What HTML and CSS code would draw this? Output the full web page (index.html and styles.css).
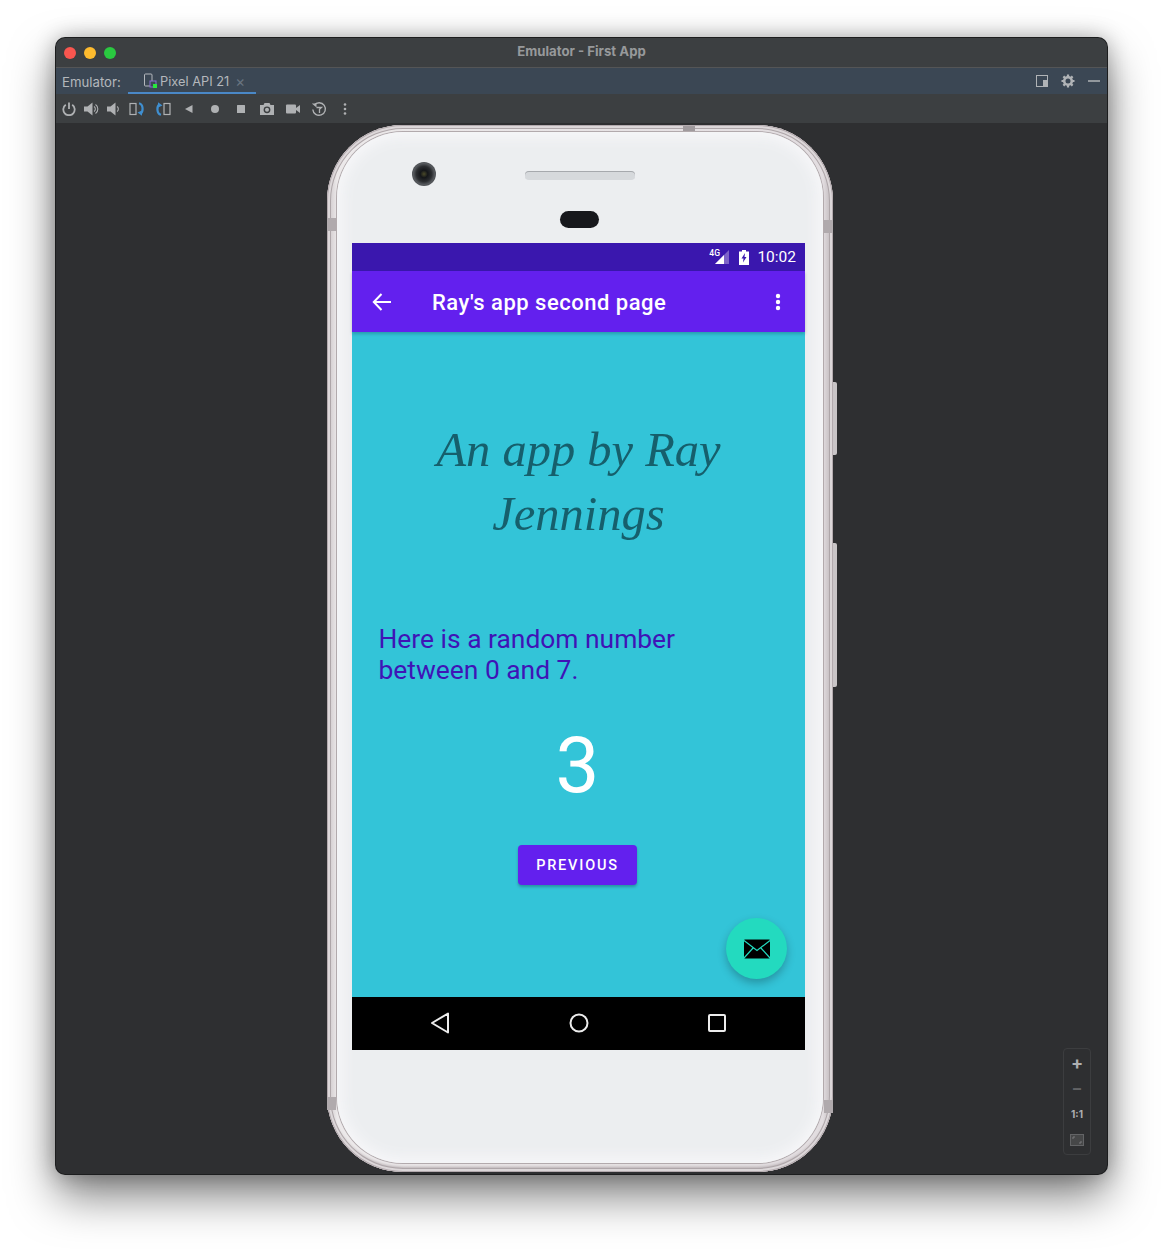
FILE: index.html
```html
<!DOCTYPE html>
<html lang="en">
<head>
    <meta charset="UTF-8">
    <title>Emulator - First App</title>
    <link rel="stylesheet" href="styles.css">
</head>
<body>
    <div class="window">
        <div class="titlebar">
            <div class="lights">
                <span class="light red"></span>
                <span class="light yellow"></span>
                <span class="light green"></span>
            </div>
            <div class="window-title">Emulator - First App</div>
        </div>

        <div class="tabbar">
            <span class="tab-label">Emulator:</span>
            <div class="tab">
                <svg width="16" height="16" viewBox="0 0 16 16">
                    <rect x="1.5" y="1" width="7.5" height="12" rx="1" fill="none" stroke="#b4b8bc" stroke-width="1"/>
                    <rect x="7" y="8" width="6" height="6" fill="#3b4754" stroke="#8a6fd0" stroke-width="1"/>
                    <rect x="10" y="11" width="4" height="4" fill="#27e83c"/>
                </svg>
                <span class="tab-name">Pixel API 21</span>
                <span class="tab-close">&#215;</span>
            </div>
            <div class="tab-actions">
                <svg width="14" height="14" viewBox="0 0 14 14">
                    <rect x="1.5" y="1.5" width="11" height="11" fill="none" stroke="#b0b3b6" stroke-width="1"/>
                    <rect x="8" y="6" width="4.5" height="6.5" fill="#b0b3b6"/>
                </svg>
                <svg width="14" height="14" viewBox="0 0 14 14">
                    <circle cx="7" cy="7" r="3.8" fill="none" stroke="#b0b3b6" stroke-width="2.6"/>
                    <path d="M7 .5v3M7 10.500v3M.5 7h3M10.500 7h3M2.400 2.400l2 2M9.600 9.600l2 2M11.600 2.400l-2 2M4.400 9.600l-2 2" stroke="#b0b3b6" stroke-width="2.200"/>
                </svg>
                <svg width="14" height="14" viewBox="0 0 14 14"><path d="M1 7h12" stroke="#b0b3b6" stroke-width="1.400"/></svg>
            </div>
        </div>

        <div class="toolbar">
            <span class="tool narrow"><svg width="14" height="14" viewBox="0 0 14 14"><path d="M3.800 2.800a5.700 5.700 0 1 0 6.400 0M7 .5V7" fill="none" stroke="#afb1b3" stroke-width="1.800"/></svg></span>
            <span class="tool narrow"><svg width="15" height="14" viewBox="0 0 15 14"><path d="M0 4.500h3.500L8.500 .5v13l-5-4H0z" fill="#afb1b3"/><path d="M10 4.500a3 3 0 0 1 0 5M11.500 2.500a5.500 5.500 0 0 1 0 9" fill="none" stroke="#afb1b3" stroke-width="1.100"/></svg></span>
            <span class="tool narrow"><svg width="14" height="14" viewBox="0 0 14 14"><path d="M1 4.500h3.500L9.500 .5v13l-5-4H1z" fill="#afb1b3"/><path d="M11 4.500a3 3 0 0 1 0 5" fill="none" stroke="#afb1b3" stroke-width="1.100"/></svg></span>
            <span class="tool"><svg width="16" height="14" viewBox="0 0 16 14"><rect x="1" y="1.500" width="6" height="11" fill="none" stroke="#afb1b3" stroke-width="1.200"/><path d="M10 1.200c4.500 1 4.500 8.500 1.500 10.300" fill="none" stroke="#3f8fd0" stroke-width="2.200"/><path d="M8.500 10.500l4.500 3.200V8.500z" fill="#3f8fd0"/></svg></span>
            <span class="tool"><svg width="16" height="14" viewBox="0 0 16 14"><rect x="9" y="1.500" width="6" height="11" fill="none" stroke="#afb1b3" stroke-width="1.200"/><path d="M6 12.800c-4.500-1-4.500-8.500-1.500-10.300" fill="none" stroke="#3f8fd0" stroke-width="2.200"/><path d="M7.500 3.500L3 .3v5.200z" fill="#3f8fd0"/></svg></span>
            <span class="tool"><svg width="12" height="12" viewBox="0 0 12 12"><path d="M9.500 2v8L2 6z" fill="#afb1b3"/></svg></span>
            <span class="tool"><svg width="12" height="12" viewBox="0 0 12 12"><circle cx="6" cy="6" r="4" fill="#afb1b3"/></svg></span>
            <span class="tool"><svg width="12" height="12" viewBox="0 0 12 12"><rect x="2" y="2" width="8" height="8" rx=".5" fill="#afb1b3"/></svg></span>
            <span class="tool"><svg width="16" height="14" viewBox="0 0 16 14"><path d="M1 3h3.500l1-2h5l1 2H15v10H1z" fill="#afb1b3"/><circle cx="8" cy="7.800" r="3.400" fill="#3c3f41"/><circle cx="8" cy="7.800" r="2" fill="#afb1b3"/></svg></span>
            <span class="tool"><svg width="16" height="14" viewBox="0 0 16 14"><rect x="1" y="2.500" width="10" height="9" rx="1" fill="#afb1b3"/><path d="M11 6l4-3v8l-4-3z" fill="#afb1b3"/></svg></span>
            <span class="tool"><svg width="16" height="16" viewBox="0 0 16 16"><path d="M3.200 4a6.300 6.300 0 1 1-1.400 4.500" fill="none" stroke="#afb1b3" stroke-width="1.400"/><path d="M.8 2.500h4.700v4z" fill="#afb1b3"/><path d="M5.500 6.500h5l-2 1.800V12" fill="none" stroke="#afb1b3" stroke-width="1.300"/></svg></span>
            <span class="tool"><svg width="4" height="12" viewBox="0 0 4 12"><circle cx="2" cy="1.500" r="1.300" fill="#afb1b3"/><circle cx="2" cy="6" r="1.300" fill="#afb1b3"/><circle cx="2" cy="10.500" r="1.300" fill="#afb1b3"/></svg></span>
        </div>

        <div class="stage">
            <div class="phone">
                <span class="rim-notch top"></span>
                <span class="rim-band left-top"></span>
                <span class="rim-band right-top"></span>
                <span class="rim-band left-bottom"></span>
                <span class="rim-band right-bottom"></span>
                <span class="side-button power"></span>
                <span class="side-button volume"></span>

                <div class="face">
                    <div class="face-top">
                        <div class="face-row">
                            <span class="camera"></span>
                            <span class="speaker"></span>
                        </div>
                        <span class="sensor"></span>
                    </div>

                    <div class="screen">
                        <div class="status-bar">
                            <span class="net">4G</span>
                            <svg class="signal" width="16" height="15" viewBox="0 0 16 15">
                                <path d="M15 0v14H1z" fill="#7d63c8"/>
                                <path d="M10 5v9H1z" fill="#fff"/>
                            </svg>
                            <svg class="battery" width="10" height="15" viewBox="0 0 10 15">
                                <path d="M3 0h4v1.500h3V15H0V1.500h3z" fill="#fff"/>
                                <path d="M6 3L2.500 8.500h2L4 12.500l3.500-5.500h-2z" fill="#3a17ae"/>
                            </svg>
                            <span class="clock">10:02</span>
                        </div>

                        <div class="app-bar">
                            <svg class="back" width="20" height="20" viewBox="0 0 20 20">
                                <path d="M19 10H2M9.500 2L1.800 10l7.700 8" fill="none" stroke="#fff" stroke-width="2"/>
                            </svg>
                            <span class="app-title">Ray's app second page</span>
                            <svg class="kebab" width="6" height="18" viewBox="0 0 6 18">
                                <circle cx="3" cy="3" r="2.200" fill="#fff"/>
                                <circle cx="3" cy="9" r="2.200" fill="#fff"/>
                                <circle cx="3" cy="15" r="2.200" fill="#fff"/>
                            </svg>
                        </div>

                        <div class="content">
                            <h1 class="heading">An app by Ray<br>Jennings</h1>
                            <p class="intro">Here is a random number between 0 and 7.</p>
                            <div class="number">3</div>
                            <button type="button" class="button">PREVIOUS</button>
                            <div class="fab">
                                <svg width="28" height="20" viewBox="0 0 28 20">
                                    <rect x="1" y="0.500" width="26" height="19" rx="1" fill="#000"/>
                                    <path d="M1 1.500l13 10 13-10M1 19l9.500-10.500M27 19L17.500 8.500" fill="none" stroke="#23dabf" stroke-width="1.200"/>
                                </svg>
                            </div>
                        </div>

                        <div class="nav-bar">
                            <svg width="20" height="22" viewBox="0 0 20 22"><path d="M18 1.500v19L2 11z" fill="none" stroke="#ececec" stroke-width="2" stroke-linejoin="round"/></svg>
                            <svg width="20" height="20" viewBox="0 0 20 20"><circle cx="10" cy="10" r="8.500" fill="none" stroke="#ececec" stroke-width="2"/></svg>
                            <svg width="18" height="18" viewBox="0 0 18 18"><rect x="1" y="1" width="16" height="16" rx="1" fill="none" stroke="#ececec" stroke-width="2"/></svg>
                        </div>
                    </div>
                </div>
            </div>

            <div class="zoom-panel">
                <span class="zoom-item plus">+</span>
                <span class="zoom-item minus">&#8211;</span>
                <span class="zoom-item ratio">1:1</span>
                <span class="zoom-item">
                    <svg width="14" height="12" viewBox="0 0 14 12">
                        <rect x=".5" y=".5" width="13" height="11" fill="#464748" stroke="#636466"/>
                        <path d="M3 5V3h2M11 7v2H9" fill="none" stroke="#7a7b7d"/>
                    </svg>
                </span>
            </div>
        </div>
    </div>
</body>
</html>
```

FILE: styles.css
```css
body {
    margin: 0;
    padding: 38px 56px 75px;
    background-color: #fff;
    font-family: Inter, "Liberation Sans", sans-serif;
    overflow: hidden;
}

/* emulator window */

.window {
    width: 1051px;
    height: 1136px;
    display: flex;
    flex-direction: column;
    background-color: #2e2f31;
    border-radius: 9px;
    box-shadow: 0 0 0 1px #1c1d1e, 0 22px 45px rgba(0, 0, 0, 0.5), 0 0 22px rgba(0, 0, 0, 0.3);
    overflow: hidden;
}

.titlebar {
    height: 29px;
    display: grid;
    grid-template-columns: 1fr auto 1fr;
    align-items: center;
    background-color: #3c3f41;
    border-bottom: 1px solid #545556;
}

.lights {
    display: flex;
    gap: 8px;
    padding-left: 8px;
}

.light {
    width: 12px;
    height: 12px;
    border-radius: 50%;
}

.red { background-color: #f9564f; }
.yellow { background-color: #febb2e; }
.green { background-color: #2ac940; }

.window-title {
    margin-top: -4px;
    color: #97999b;
    font-size: 13.2px;
    font-weight: 700;
}

.tabbar {
    height: 26px;
    display: flex;
    align-items: center;
    background-color: #3b4754;
    color: #b4b8bc;
    font-size: 12.8px;
}

.tab-label {
    width: 66px;
    padding: 1px 0 0 6px;
    font-size: 13.2px;
}

.tab {
    flex: none;
    width: 128px;
    height: 26px;
    display: flex;
    align-items: center;
    padding: 2px 0 0 15px;
    border-bottom: 3px solid #4a88c7;
    box-sizing: border-box;
    margin-top: 1px;
}

.tab-name {
    margin-left: 1px;
    white-space: nowrap;
}

.tab-close {
    margin-left: 6px;
    color: #687480;
    font-size: 15px;
}

.tab-actions {
    margin-left: auto;
    display: flex;
    gap: 12px;
    padding-right: 6px;
}

.toolbar {
    height: 29px;
    display: flex;
    align-items: center;
    padding-left: 2px;
    background-color: #3c3f41;
}

.tool {
    width: 26px;
    display: flex;
    justify-content: center;
    align-items: center;
}

.tool.narrow {
    width: 22px;
}

.stage {
    flex: 1;
    position: relative;
    padding: 2px 0 0 271px;
}

/* phone */

.phone {
    width: 486px;
    height: 1031px;
    position: relative;
    padding: 7px 10px 9px;
    background: linear-gradient(90deg, #c9c2c5, #ece9ea 2%, #e2dde0 98%, #b9b2b5);
    border-radius: 76px;
    box-shadow: inset 0 0 0 1px #b3aaae, inset 0 0 0 3px #dcd7d9, inset 0 0 0 4px #aea6a9, inset 0 -5px 3px #b6aeb1;
}

.rim-notch.top {
    position: absolute;
    top: 1px;
    left: 356px;
    width: 12px;
    height: 5px;
    background-color: #a09a9d;
}

.rim-band {
    position: absolute;
    width: 9px;
    height: 13px;
    background-color: #b0aaad;
}

.rim-band.left-top { top: 93px; left: 0; }
.rim-band.right-top { top: 95px; right: 0; }
.rim-band.left-bottom { bottom: 62px; left: 0; }
.rim-band.right-bottom { bottom: 59px; right: 0; }

.side-button {
    position: absolute;
    right: -4px;
    width: 4px;
    background-color: #c9c5c7;
    border-radius: 0 2px 2px 0;
}

.side-button.power { top: 257px; height: 73px; }
.side-button.volume { top: 418px; height: 144px; }

.face {
    height: 100%;
    padding: 0 18px 0 15px;
    box-sizing: border-box;
    background-color: #eceef0;
    border-radius: 66px;
    box-shadow: 0 0 0 1px #b2aaad, inset 0 0 14px 5px #f7f7f9;
}

.face-top {
    height: 111px;
    padding: 30px 0 0 60px;
    box-sizing: border-box;
}

.face-row {
    display: flex;
}

.camera {
    width: 24px;
    height: 24px;
    border-radius: 50%;
    background: radial-gradient(circle, #4b4a2a 0, #15171a 22%, #2b2d30 45%, #55585c 62%, #3a3c40 100%);
}

.speaker {
    width: 110px;
    height: 9px;
    margin: 9px 0 0 89px;
    border-radius: 4px;
    background-color: #d6d9dc;
    box-shadow: inset 0 1px 0 #a6a9ad;
}

.sensor {
    display: block;
    width: 39px;
    height: 17px;
    margin: 25px 0 0 148px;
    border-radius: 9px;
    background-color: #17181c;
}

/* android screen */

.screen {
    width: 453px;
    height: 807px;
    display: flex;
    flex-direction: column;
    font-family: Roboto, sans-serif;
}

.status-bar {
    height: 28px;
    display: flex;
    align-items: center;
    justify-content: flex-end;
    padding-right: 9px;
    background-color: #3a17ae;
    color: #fff;
}

.net {
    font-size: 9px;
    font-weight: 500;
    margin: -8px -6px 0 0;
    transform: scaleX(0.95);
}

.signal {
    margin-right: 9px;
}

.battery {
    margin-right: 8px;
}

.clock {
    font-size: 15.5px;
}

.app-bar {
    height: 61px;
    display: flex;
    align-items: center;
    padding: 0 24px 0 20px;
    background-color: #6320ee;
    color: #fff;
    box-shadow: 0 2px 3px rgba(0, 0, 0, 0.2);
    z-index: 1;
}

.app-title {
    margin: 2px 0 0 40px;
    font-size: 22px;
    font-weight: 500;
    letter-spacing: 0.5px;
}

.kebab {
    margin-left: auto;
}

.content {
    flex: 1;
    position: relative;
    display: flex;
    flex-direction: column;
    background-color: #33c4d8;
}

.heading {
    margin: 86px 0 0;
    color: #165f6c;
    font-family: "Liberation Serif", serif;
    font-style: italic;
    font-weight: 400;
    font-size: 48.5px;
    line-height: 64px;
    text-align: center;
}

.intro {
    width: 320px;
    margin: 78px 0 0 26.5px;
    color: #3f14b6;
    font-size: 26.4px;
    line-height: 31px;
}

.number {
    margin: 35px 2px 0 0;
    height: 90px;
    color: #fff;
    font-size: 78px;
    line-height: 90px;
    text-align: center;
}

.button {
    align-self: center;
    width: 119px;
    height: 40px;
    margin: 34px 2px 0 0;
    padding: 0;
    border: none;
    border-radius: 4px;
    background-color: #6320ee;
    color: #fff;
    font-family: Roboto, sans-serif;
    font-size: 14.500px;
    font-weight: 500;
    letter-spacing: 1.800px;
    box-shadow: 0 2px 3px rgba(0, 0, 0, 0.25);
}

.fab {
    position: absolute;
    right: 18px;
    bottom: 18px;
    width: 61px;
    height: 61px;
    display: flex;
    align-items: center;
    justify-content: center;
    border-radius: 50%;
    background-color: #23dabf;
    box-shadow: 0 4px 8px rgba(0, 0, 0, 0.25);
}

.nav-bar {
    height: 53px;
    display: flex;
    align-items: center;
    justify-content: space-between;
    padding: 0 79px 1px 78px;
    box-sizing: border-box;
    background-color: #000;
}

.nav-bar svg:nth-child(2) {
    margin-right: 1px;
}

/* zoom controls, bottom right of the stage */

.zoom-panel {
    position: absolute;
    right: 16px;
    bottom: 19px;
    width: 26px;
    height: 105px;
    display: flex;
    flex-direction: column;
    border: 1px solid #3c3d3f;
    border-radius: 4px;
}

.zoom-item {
    height: 26px;
    display: flex;
    align-items: center;
    justify-content: center;
    color: #aeb0b2;
    font-size: 11px;
    font-weight: 700;
}

.zoom-item.plus { font-size: 18px; }
.zoom-item.minus { font-size: 16px; color: #626365; }
.zoom-item.ratio { font-size: 10px; }
```
